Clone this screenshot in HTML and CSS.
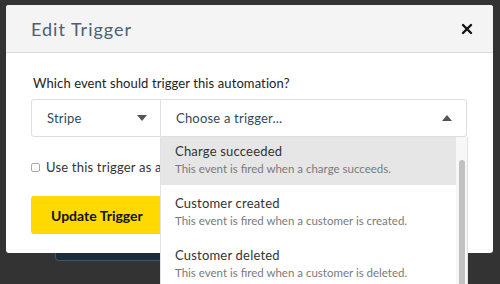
FILE: index.html
```html
<!DOCTYPE html>
<html>
<head>
<meta charset="utf-8">
<link rel="stylesheet" href="styles.css">
</head>
<body>
<div class="page">
  <div class="modal">
    <div class="modal-header">
      <h2 class="modal-title">Edit Trigger</h2>
      <span class="close" aria-label="Close">
        <svg width="12" height="12" viewBox="0 0 12 12"><path d="M2 2 L10 10 M10 2 L2 10" stroke="#111" stroke-width="2.4" stroke-linecap="round"/></svg>
      </span>
    </div>
    <div class="modal-body">
      <div class="label">Which event should trigger this automation?</div>
      <div class="select-row">
        <div class="select app-select">
          <span class="select-value">Stripe</span>
          <svg class="caret" width="10" height="6" viewBox="0 0 10 6"><path d="M0 0 H10 L5 6 Z" fill="#555"/></svg>
        </div>
        <div class="select trigger-select">
          <span class="select-value">Choose a trigger...</span>
          <svg class="caret" width="10" height="6" viewBox="0 0 10 6"><path d="M0 6 H10 L5 0 Z" fill="#555"/></svg>
          <div class="menu">
            <div class="menu-list">
              <div class="option active first">
                <div class="option-title">Charge succeeded</div>
                <div class="option-desc">This event is fired when a charge succeeds.</div>
              </div>
              <div class="option">
                <div class="option-title">Customer created</div>
                <div class="option-desc">This event is fired when a customer is created.</div>
              </div>
              <div class="option">
                <div class="option-title">Customer deleted</div>
                <div class="option-desc">This event is fired when a customer is deleted.</div>
              </div>
            </div>
            <div class="scroll-track"><div class="scroll-thumb"></div></div>
          </div>
        </div>
      </div>
      <label class="check-row"><span class="checkbox"></span><span>Use this trigger as a default</span></label>
      <button class="btn">Update Trigger</button>
    </div>
  </div>
  <div class="behind"></div>
</div>
</body>
</html>
```
FILE: styles.css
```css
html, body {
  margin: 0;
  padding: 0;
  background: #333333;
  font-family: Lato, "Open Sans", sans-serif;
}
.page {
  width: 500px;
  height: 284px;
  overflow: hidden;
  padding-top: 5px;
  box-sizing: border-box;
}
.modal {
  margin-left: 6px;
  width: 487px;
  background: #ffffff;
  border-radius: 3px;
}
.modal-header {
  height: 48px;
  background: #f4f4f4;
  border-bottom: 1px solid #dcdcdc;
  border-radius: 3px 3px 0 0;
  display: flex;
  align-items: center;
  justify-content: space-between;
  padding: 0 20px 0 25px;
  box-sizing: border-box;
}
.modal-title {
  margin: 0;
  font-size: 18px;
  font-weight: 400;
  color: #4a6172;
  letter-spacing: 1px;
}
.close {
  display: flex;
  width: 12px;
  height: 12px;
}
.modal-body {
  padding: 22px 26px 19px 25px;
}
.label {
  font-size: 13px;
  color: #222;
  line-height: 16px;
  height: 16px;
  padding-left: 2px;
  letter-spacing: 0.1px;
}
.select-row {
  display: flex;
  margin-top: 8px;
  height: 38px;
}
.select {
  position: relative;
  height: 38px;
  box-sizing: border-box;
  border: 1px solid #dedede;
  display: flex;
  align-items: center;
  justify-content: space-between;
  background: #fff;
}
.app-select {
  width: 130px;
  border-radius: 3px 0 0 3px;
  padding: 0 13px 0 15px;
}
.trigger-select {
  flex: 1;
  border-left: none;
  border-radius: 0 3px 3px 0;
  padding: 0 14px 0 15px;
}
.select-value {
  font-size: 13px;
  color: #2f4a5d;
  letter-spacing: 0.2px;
}
.caret { display: block; }
.menu {
  position: absolute;
  left: -1px;
  top: 37px;
  width: 308px;
  height: 150px;
  background: #fff;
  border: 1px solid #e2e2e2;
  border-top: none;
  box-sizing: border-box;
  display: flex;
  overflow: hidden;
}
.menu-list {
  flex: 1;
  overflow: hidden;
}
.option {
  height: 52px;
  box-sizing: border-box;
  padding: 10px 14px 0 14px;
}
.option.first { margin-top: -4px; }
.option.active { background: #e6e6e6; }
.option-title {
  font-size: 13px;
  color: #333;
  line-height: 16px;
  letter-spacing: 0.2px;
}
.option-desc {
  font-size: 11.5px;
  color: #7a7a7a;
  line-height: 14px;
  margin-top: 3px;
}
.scroll-track {
  width: 11px;
  background: #f7f7f7;
  display: flex;
  justify-content: center;
  padding-top: 23px;
}
.scroll-thumb {
  width: 6px;
  height: 200px;
  background: #c1c1c1;
  border-radius: 3px;
}
.check-row {
  display: flex;
  align-items: center;
  gap: 6px;
  margin-top: 22px;
  font-size: 13px;
  color: #333;
  height: 16px;
  letter-spacing: 0.2px;
}
.checkbox {
  width: 7px;
  height: 7px;
  border: 1px solid #aaa;
  border-radius: 2px;
  background: #fff;
}
.btn {
  display: block;
  margin-top: 21px;
  height: 38px;
  padding: 0 20px;
  background: #ffd900;
  border: none;
  border-radius: 3px;
  font-family: Lato, sans-serif;
  font-weight: 700;
  font-size: 14px;
  color: #111;
}
.behind {
  margin-left: 55px;
  width: 300px;
  height: 8px;
  background: #1b2d3b;
  border: 1px solid #3d5566;
  border-top: none;
  border-radius: 0 0 4px 4px;
  box-sizing: border-box;
}
```
